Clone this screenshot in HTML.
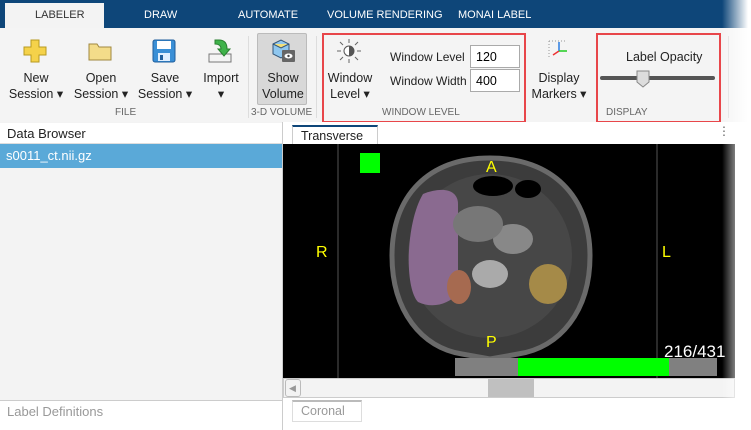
<!DOCTYPE html>
<html><head><style>
*{margin:0;padding:0;box-sizing:border-box}
body{width:751px;height:430px;overflow:hidden;background:#fff;font-family:"Liberation Sans",sans-serif;position:relative}
.a{position:absolute}
.tab{position:absolute;top:9px;color:#fff;font-size:11px;}
.lbl{position:absolute;font-size:12.5px;color:#222;text-align:center;line-height:16px}
.grp{position:absolute;top:107px;font-size:10px;color:#666;}
.sep{position:absolute;top:36px;width:1px;height:82px;background:#ddd}
</style></head><body>
<div class="a" style="left:0;top:0;width:751px;height:28px;background:#0e4679"></div>
<div class="a" style="left:5px;top:3px;width:99px;height:25px;background:#f3f3f3"></div>
<div class="tab" style="left:35px;color:#333">LABELER</div>
<div class="tab" style="left:144px">DRAW</div>
<div class="tab" style="left:238px">AUTOMATE</div>
<div class="tab" style="left:327px">VOLUME RENDERING</div>
<div class="tab" style="left:458px">MONAI LABEL</div>
<div class="a" style="left:0;top:28px;width:751px;height:94px;background:#f4f4f4"></div>
<svg class="a" style="left:22px;top:38px" width="26" height="26"><path d="M9 2h8v7h7v8h-7v7H9v-7H2V9h7z" fill="#f5d24a" stroke="#b89a20"/></svg>
<svg class="a" style="left:87px;top:40px" width="26" height="22"><path d="M2 4h8l2 3h12v13H2z" fill="#f3dc8a" stroke="#a08840"/></svg>
<svg class="a" style="left:151px;top:38px" width="26" height="26"><rect x="2" y="2" width="22" height="22" rx="2" fill="#3a8fd6" stroke="#1f5e9c"/><rect x="6" y="3" width="14" height="8" fill="#fff"/><rect x="7" y="15" width="12" height="8" fill="#dfefff"/><rect x="9" y="17" width="3" height="5" fill="#1f5e9c"/></svg>
<svg class="a" style="left:207px;top:38px" width="26" height="26"><rect x="2" y="16" width="22" height="8" fill="#f4f4f4" stroke="#777"/><path d="M8 2h4c6 0 8 4 8 9h3l-6 7-6-7h3c0-3-2-5-6-5z" fill="#3fb24a" stroke="#2a8030"/></svg>
<div class="a" style="left:257px;top:33px;width:50px;height:72px;background:#d8d8d8;border:1px solid #bbb;border-radius:2px"></div>
<svg class="a" style="left:270px;top:38px" width="26" height="26"><path d="M3 6l8-4 8 4v10l-8 4-8-4z" fill="#8fc7ef" stroke="#357"/><path d="M3 6l8 4 8-4" fill="#f2df7a" stroke="#357"/><rect x="12" y="12" width="13" height="12" fill="#666" rx="1"/><ellipse cx="18.5" cy="18" rx="4" ry="2.5" fill="#fff"/><circle cx="18.5" cy="18" r="1.2" fill="#444"/></svg>
<svg class="a" style="left:335px;top:38px" width="28" height="26"><circle cx="14" cy="13" r="5" fill="#fff" stroke="#555"/><path d="M14 8a5 5 0 0 1 0 10z" fill="#555"/><g stroke="#666"><path d="M14 1v4M14 21v4M2 13h4M22 13h4M5 4l3 3M20 19l3 3M23 4l-3 3M8 19l-3 3"/></g></svg>
<svg class="a" style="left:545px;top:37px" width="26" height="26"><path d="M4 4v18M4 4h18" stroke="#999" stroke-dasharray="1 2"/><path d="M8 18l6-4" stroke="#e33" stroke-width="1.5"/><path d="M14 14V5" stroke="#2a7de1" stroke-width="1.5"/><path d="M14 14h8" stroke="#2c2" stroke-width="1.5"/></svg>
<div class="lbl" style="left:8px;top:70px;width:56px">New<br>Session ▾</div>
<div class="lbl" style="left:72px;top:70px;width:58px">Open<br>Session ▾</div>
<div class="lbl" style="left:136px;top:70px;width:58px">Save<br>Session ▾</div>
<div class="lbl" style="left:198px;top:70px;width:46px">Import<br>▾</div>
<div class="lbl" style="left:258px;top:70px;width:50px">Show<br>Volume</div>
<div class="lbl" style="left:324px;top:70px;width:52px">Window<br>Level ▾</div>
<div class="lbl" style="left:530px;top:70px;width:58px">Display<br>Markers ▾</div>
<div class="grp" style="left:115px">FILE</div>
<div class="grp" style="left:251px">3-D VOLUME</div>
<div class="grp" style="left:382px">WINDOW LEVEL</div>
<div class="grp" style="left:606px">DISPLAY</div>
<div class="sep" style="left:248px"></div><div class="sep" style="left:316px"></div><div class="sep" style="left:728px"></div>
<div class="a" style="left:390px;top:50px;font-size:12px;color:#222">Window Level</div>
<div class="a" style="left:390px;top:74px;font-size:12px;color:#222">Window Width</div>
<div class="a" style="left:470px;top:45px;width:50px;height:23px;background:#fff;border:1px solid #aaa;font-size:12.5px;padding:4px 5px">120</div>
<div class="a" style="left:470px;top:69px;width:50px;height:23px;background:#fff;border:1px solid #aaa;font-size:12.5px;padding:4px 5px">400</div>
<div class="a" style="left:626px;top:50px;font-size:12.5px;color:#222">Label Opacity</div>
<div class="a" style="left:600px;top:76px;width:115px;height:4px;background:#555;border-radius:2px"></div>
<svg class="a" style="left:636px;top:70px" width="14" height="18"><path d="M1 1h12v11l-6 5-6-5z" fill="#ddd" stroke="#888"/></svg>
<div class="a" style="left:322px;top:33px;width:204px;height:90px;border:2px solid #e8464a"></div>
<div class="a" style="left:596px;top:33px;width:125px;height:90px;border:2px solid #e8464a"></div>
<div class="a" style="left:0;top:122px;width:283px;height:308px;background:#f3f3f3;border-right:1px solid #ccc"></div>
<div class="a" style="left:0;top:123px;width:282px;height:21px;background:#fff;border-bottom:1px solid #ddd;font-size:13px;padding:3px 7px;color:#222">Data Browser</div>
<div class="a" style="left:0;top:144px;width:282px;height:24px;background:#5aa9d8;color:#fff;font-size:13px;padding:4px 6px">s0011_ct.nii.gz</div>
<div class="a" style="left:0;top:400px;width:282px;height:30px;background:#fff;border-top:1px solid #ccc;font-size:13px;padding:3px 7px;color:#999">Label Definitions</div>
<div class="a" style="left:283px;top:122px;width:450px;height:22px;background:#fff"></div>
<div class="a" style="left:292px;top:125px;width:86px;height:19px;border:1px solid #ccc;border-top:2px solid #0e4679;border-bottom:none;font-size:12.5px;padding:2px 8px;color:#222">Transverse</div>
<div class="a" style="left:718px;top:124px;font-size:12px;color:#555">⋮</div>
<svg class="a" style="left:283px;top:144px" width="452" height="234">
<rect width="452" height="234" fill="#000"/>
<path d="M55 0v234M374 0v234" stroke="#555"/>
<rect x="77" y="9" width="20" height="20" fill="#00ff00"/>
<path d="M207 14c-62 0-98 38-98 98 0 55 30 92 70 98l28 5 28-5c42-6 72-43 72-98 0-60-38-98-100-98z" fill="#3c3c3c" stroke="#6a6a6a" stroke-width="5"/>
<ellipse cx="207" cy="112" rx="82" ry="82" fill="#474747"/>
<path d="M140 50c20-8 35-4 35 10v90c-10 10-25 15-40 8-14-15-12-80 5-108z" fill="#8a6a90"/>
<ellipse cx="176" cy="143" rx="12" ry="17" fill="#a66a50"/>
<ellipse cx="265" cy="140" rx="19" ry="20" fill="#a58a48"/>
<ellipse cx="207" cy="130" rx="18" ry="14" fill="#aaa"/>
<ellipse cx="210" cy="42" rx="20" ry="10" fill="#000"/>
<ellipse cx="245" cy="45" rx="13" ry="9" fill="#000"/>
<ellipse cx="230" cy="95" rx="20" ry="15" fill="#888"/>
<ellipse cx="195" cy="80" rx="25" ry="18" fill="#777"/>
<g font-family="Liberation Sans" font-size="16" fill="#ffff00"><text x="203" y="28">A</text><text x="33" y="113">R</text><text x="379" y="113">L</text><text x="203" y="203">P</text></g>
<text x="381" y="213" font-family="Liberation Sans" font-size="17" fill="#fff">216/431</text>
<rect x="172" y="214" width="63" height="18" fill="#808080"/><rect x="235" y="214" width="151" height="18" fill="#00ff00"/><rect x="386" y="214" width="48" height="18" fill="#808080"/>
</svg>
<div class="a" style="left:283px;top:378px;width:452px;height:20px;background:#f3f3f3;border:1px solid #ccc"></div>
<div class="a" style="left:285px;top:379px;width:16px;height:18px;border:1px solid #bbb;border-radius:3px;font-size:9px;color:#999;padding:3px 3px">◀</div>
<div class="a" style="left:488px;top:379px;width:46px;height:18px;background:#c0c0c0"></div>
<div class="a" style="left:283px;top:398px;width:452px;height:24px;background:#fff"></div>
<div class="a" style="left:292px;top:400px;width:70px;height:22px;border:1px solid #ddd;border-top:2px solid #bbb;font-size:12.5px;padding:2px 8px;color:#999">Coronal</div>
<div class="a" style="left:0;top:0;width:751px;height:430px;background:linear-gradient(to right,rgba(255,255,255,0) 722px,#fff 748px)"></div>
</body></html>
